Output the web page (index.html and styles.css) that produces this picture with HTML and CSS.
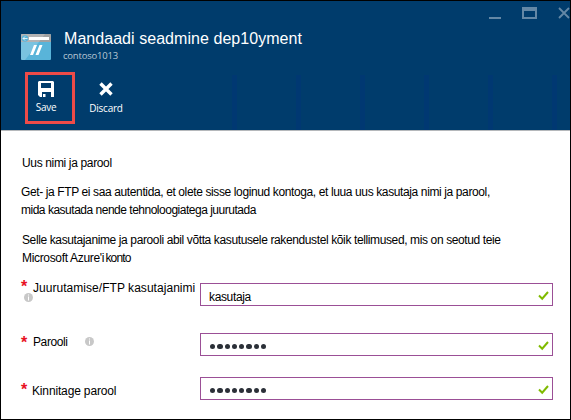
FILE: index.html
```html
<!DOCTYPE html>
<html lang="et">
<head>
<meta charset="utf-8">
<title>Mandaadi seadmine</title>
<link rel="stylesheet" href="styles.css">
</head>
<body>
<div class="blade">
  <header class="head">
    <div class="controls">
      <svg width="83" height="16" viewBox="0 0 83 16">
        <path d="M0 10h12v2H0z"/>
        <path fill-rule="evenodd" d="M33 0h15v12H33zM35 4v6h11V4z"/>
        <path class="line" d="M70 1l10 10M80 1L70 11"/>
      </svg>
    </div>
    <div class="title-row">
      <svg class="site" width="30" height="26" viewBox="0 0 30 26">
        <rect width="30" height="26" rx="1" fill="#59b4d9"/>
        <path d="M1 0h28a1 1 0 0 1 1 1v7H0V1a1 1 0 0 1 1-1z" fill="#a0a1a2"/>
        <path d="M0 1a1 1 0 0 1 1-1h23L4 26H1a1 1 0 0 1-1-1z" fill="#fff" opacity=".2"/>
        <rect x="8" y="3" width="20" height="3" fill="#fff"/>
        <circle cx="4" cy="4.500" r="3.200" fill="#59b4d9"/>
        <path d="M2 4.500h4.500M4 2.500l-2 2 2 2" fill="none" stroke="#fff" stroke-width=".8"/>
        <path d="M13 11h3l-4 10H9zM18.500 11h3l-4 10h-3z" fill="#fff"/>
      </svg>
      <div>
        <h1>Mandaadi seadmine dep10yment</h1>
        <div class="sub">contoso1013</div>
      </div>
    </div>
    <div class="toolbar">
      <div class="tool save">
        <svg width="16" height="16" viewBox="0 0 16 16"><path fill="#fff" fill-rule="evenodd" d="M1 0h14l1 1v15h-3v-5H4v5H2l-2-2V1zM3 2v5h10V2z"/><path fill="#fff" d="M5 13h2.500v3H5z"/></svg>
        <span>Save</span>
      </div>
      <div class="tool discard">
        <svg width="14" height="14" viewBox="0 0 14 14"><path d="M1.500 1.500l11 11M12.500 1.500l-11 11" stroke="#fff" stroke-width="3.400"/></svg>
        <span>Discard</span>
      </div>
      <div class="stripes"><i></i><i></i><i></i><i></i><i></i><i></i></div>
    </div>
  </header>
  <main>
    <p class="a"><span class="l1">Uus nimi ja parool</span></p>
    <p class="b"><span class="l2">Get- ja FTP ei saa autentida, et olete sisse loginud kontoga, et luua uus kasutaja nimi ja parool,</span><br><span class="l3">mida kasutada nende tehnoloogiatega juurutada</span></p>
    <p class="c"><span class="l4">Selle kasutajanime ja parooli abil võtta kasutusele rakendustel kõik tellimused, mis on seotud teie</span><br><span class="l5">Microsoft Azure'i</span> <span class="l6">konto</span></p>
    <div class="row r1">
      <div class="label"><b>*</b><span class="l7">Juurutamise/FTP kasutajanimi</span><svg class="info" width="9" height="9" viewBox="0 0 9 9"><circle cx="4.500" cy="4.500" r="4.500"/><path d="M4 1.500h1v1H4zM4 3.500h1v4H4z"/></svg></div>
      <div class="field"><span class="value">kasutaja</span><svg class="check" width="11" height="10" viewBox="0 0 11 10"><path d="M1 4.500l3.200 3.200L10 1"/></svg></div>
    </div>
    <div class="row r2">
      <div class="label"><b>*</b><span class="l8">Parooli</span><svg class="info" width="9" height="9" viewBox="0 0 9 9"><circle cx="4.500" cy="4.500" r="4.500"/><path d="M4 1.500h1v1H4zM4 3.500h1v4H4z"/></svg></div>
      <div class="field"><span class="dots"><i></i><i></i><i></i><i></i><i></i><i></i><i></i><i></i></span><svg class="check" width="11" height="10" viewBox="0 0 11 10"><path d="M1 4.500l3.200 3.200L10 1"/></svg></div>
    </div>
    <div class="row r3">
      <div class="label"><b>*</b><span class="l9">Kinnitage parool</span></div>
      <div class="field"><span class="dots"><i></i><i></i><i></i><i></i><i></i><i></i><i></i><i></i></span><svg class="check" width="11" height="10" viewBox="0 0 11 10"><path d="M1 4.500l3.200 3.200L10 1"/></svg></div>
    </div>
  </main>
</div>
</body>
</html>
```
FILE: styles.css
```css
* { box-sizing: border-box; }
body { margin: 0; background: #fff; font: 12px/18px "Liberation Sans", Arial, sans-serif; color: #000; }
.blade { width: 571px; height: 420px; border: 1px solid #000; overflow: hidden; white-space: nowrap; }
.head { height: 130px; background: #003c6c; border-bottom: 1px solid #b5b8bb; color: #fff; }
.controls { height: 27px; padding: 6px 0 0 488px; }
.controls svg { display: block; fill: #6488a6; }
.controls .line { fill: none; stroke: #6488a6; stroke-width: 1.8; }
.title-row { display: flex; height: 43px; padding-left: 20px; gap: 13px; }
.site { margin-top: 6px; }
h1 { margin: 0; font-size: 16px; font-weight: 400; line-height: 22px; letter-spacing: .05px; }
.sub { font: 9.500px/12px "Open Sans", sans-serif; color: #b9c8d5; margin: 0 0 0 -1px; letter-spacing: -.2px; }
.toolbar { display: flex; height: 59px; }
.tool { display: flex; flex-direction: column; align-items: center; font: 10px/12px "Open Sans", sans-serif; letter-spacing: -.25px; }
.tool svg { display: block; }
.save { width: 50px; height: 52px; margin: 1px 0 0 24px; border: 3px solid #ee4b48; padding: 6px 8px 0 0; }
.save span { margin-top: 4px; }
.discard { width: 40px; margin-left: 11px; padding-top: 11px; }
.discard span { margin-top: 6px; }
.stripes { display: flex; gap: 59px; margin: 4px 0 0 106px; }
.stripes i { width: 5px; background: #003872; flex: none; }
main { padding: 23px 0 0 20px; }
p { margin: 0; }
.a { padding-left: 1px; }
.b { margin-top: 11px; }
.c { margin-top: 12px; padding-left: 1px; }
.l1 { letter-spacing: -.35px; }
.l2, .l4 { letter-spacing: -.38px; }
.l3 { letter-spacing: -.49px; }
.l5 { letter-spacing: -.33px; }
.l6 { letter-spacing: -.8px; margin-left: -2px; }
.l7 { letter-spacing: .04px; }
.l8 { letter-spacing: -.4px; }
.l9 { letter-spacing: -.15px; margin-left: -1px; }
.value { letter-spacing: -.35px; }
.row { display: flex; height: 23px; }
.r1 { margin-top: 16px; }
.r2 { margin-top: 27px; }
.r3 { margin-top: 21px; }
.label { width: 179px; position: relative; display: flex; align-items: flex-start; }
.label b { color: #e81123; font-size: 16px; font-weight: 700; width: 12px; line-height: 20px; }
.info { fill: #c8c8c8; }
.info path { fill: #fff; }
.r1 b { margin-top: -6px; }
.r1 span { margin-top: -4px; }
.r1 .info { position: absolute; left: 3px; top: 10px; }
.r1 .value { margin: 4px 0 0; }
.r2 b { margin-top: 0; }
.r2 .info { margin: 4px 0 0 17px; }
.r3 b { margin-top: 3px; }
.r3 .l9 { margin-top: 5px; }
.field { width: 353px; height: 23px; border: 1px solid #9b4f96; display: flex; align-items: center; justify-content: space-between; padding: 0 3px 0 8px; }
.dots { display: flex; gap: 2px; padding: 4px 0 0 1px; }
.dots i { width: 5.300px; height: 5.300px; border-radius: 50%; background: #2b3038; }
.check { fill: none; stroke: #7fba00; stroke-width: 2; margin-top: 2px; }
```
